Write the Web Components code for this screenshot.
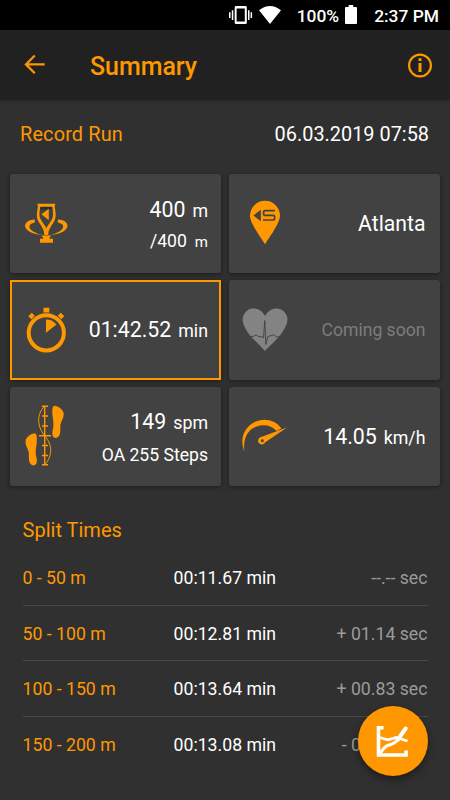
<!DOCTYPE html>
<html lang="en">
<head>
<meta charset="utf-8">
<title>Summary</title>
<style>
html,body{margin:0;height:100%;background:#303030}
body{font-family:Roboto,"Noto Sans",sans-serif;overflow:hidden}
</style>
</head>
<body>
<run-summary></run-summary>
<script>
const define = (name, html) => {
  const t = document.createElement('template');
  t.innerHTML = html;
  customElements.define(name, class extends HTMLElement {
    constructor() {
      super();
      this.attachShadow({mode: 'open'}).appendChild(t.content.cloneNode(true));
    }
  });
};

define('status-bar', `
<style>
:host{display:flex;height:30px;background:#000;color:#fff;font-size:17.400px;font-weight:500;line-height:32px;box-sizing:border-box;padding-right:11px;justify-content:flex-end;align-items:flex-start;white-space:pre}
svg{display:block;flex:none}
.pct{margin-left:15px}
.time{margin-left:17px}
</style>
<svg width="54" height="30" viewBox="228 0 54 30" fill="#fff">
<path fill-rule="evenodd" d="M236 6h9.500a1.300 1.300 0 0 1 1.300 1.300v15.400a1.300 1.300 0 0 1-1.300 1.300h-9.500a1.300 1.300 0 0 1-1.300-1.300V7.300A1.300 1.300 0 0 1 236 6zM236.600 8.500v13h8.200v-13z"/>
<path d="M229 12.200h1.500v5.800H229zM231.800 10.200h1.500v9.700h-1.500zM248 10.200h1.500v9.700H248zM250.600 12.200h1.500v5.800h-1.500z"/>
<path d="M259 10.200Q270 1.600 281 10.200L270 24z"/></svg>
<span class="pct">100%</span>
<svg width="12" height="30" viewBox="0 0 12 30" style="margin-left:6px"><path fill="#fff" d="M0 8q0-1 1-1h2.700V5h4.500v2H11q1 0 1 1v15q0 1-1 1H1q-1 0-1-1z"/></svg>
<span class="time">2:37 PM</span>`);

define('app-bar', `
<style>
:host{display:flex;height:70px;background:#212121;color:#ff9800;align-items:center;padding:0 18px 0 23px;box-shadow:0 1px 4px rgba(0,0,0,.25);box-sizing:border-box;position:relative}
.title{flex:1;margin-left:45px;font-size:25px;letter-spacing:-.05px;font-weight:500;line-height:30px;padding-top:4px}
svg{display:block;flex:none}
</style>
<svg width="22" height="22" viewBox="0 0 22 22" fill="none" stroke="#ff9800" stroke-width="2.200"><path d="M21.700 10.400H3M11.800 1.500l-8.900 8.900 8.900 8.900"/></svg>
<span class="title"><slot></slot></span>
<svg width="25" height="25" viewBox="0 0 25 25"><circle cx="13" cy="12.500" r="10.900" fill="none" stroke="#ff9800" stroke-width="2.200"/><path fill="#ff9800" d="M11.500 5.300h3v2.600h-3zM11.500 10h3v9h-3z"/></svg>`);

define('run-heading', `
<style>
:host{display:flex;justify-content:space-between;height:74px;box-sizing:border-box;padding:22px 21px 0 20px;font-size:19.900px;line-height:26px;color:#fff}
::slotted([slot=name]){color:#ff9800;letter-spacing:.15px}
</style><slot name="name"></slot><slot></slot>`);

define('stat-card', `
<style>
:host{display:flex;align-items:center;background:#424242;border-radius:3px;box-shadow:0 1px 4px rgba(0,0,0,.45);box-sizing:border-box;color:#fff;white-space:pre;position:relative}
:host([active]){border-radius:0}
:host([active])::after{content:"";position:absolute;inset:0;border:2px solid #ff9800}
:host([muted]){color:#7c7c7c}
.v{flex:1;display:flex;flex-direction:column;align-items:flex-end;padding-right:13px}
:host(.right) .v{padding-right:14.500px}
:host(.low) .v{padding-top:4px}
::slotted(svg){display:block;flex:none;margin-left:12px}
</style><slot name="icon"></slot><div class="v"><slot></slot></div>`);

define('stat-value', `
<style>
:host{display:flex;align-items:baseline;font-size:21.300px;line-height:31px}
.u{font-size:17.800px;margin-left:7px}
:host([small]){font-size:17.600px}
:host([small]) .u{font-size:15px;margin-left:8px}
</style><span><slot></slot></span><span class="u"><slot name="unit"></slot></span>`);

define('split-row', `
<style>
:host{display:grid;grid-template-columns:151px 1fr auto;height:55.500px;box-sizing:border-box;border-bottom:1px solid #484848;font-size:17.700px;line-height:22px;padding-top:17px;color:#fff;white-space:pre}
:host(:last-of-type){border-bottom:0}
::slotted([slot=range]){color:#ff9800}
::slotted([slot=delta]){color:#9b9b9b}
</style><slot name="range"></slot><slot></slot><slot name="delta"></slot>`);

define('chart-fab', `
<style>
:host{display:block;width:70px;height:70px;border-radius:50%;background:#ff9800;box-shadow:0 4px 9px rgba(0,0,0,.4)}
svg{display:block}
</style>
<svg width="70" height="70" viewBox="358 706 70 70" fill="none" stroke="#fff" stroke-width="3.600"><path d="M383.500 727.800h-5V755h27.600v-4.600"/><path stroke-width="2.800" d="M379 737.500l9 2.400 8.500-2.500 4.500 1.600 6.500 2"/><path stroke-width="3.200" d="M379.500 754c4-5 4.500-7 8-8.500 6.500-1.500 9-3.500 11.500-7.500"/><path stroke-width="4" stroke-linecap="round" d="M397.500 740l8.200-11.500"/></svg>`);

define('run-summary', `
<style>
:host{display:flex;flex-direction:column;height:800px;width:450px;overflow:hidden;background:#303030;position:relative}
.grid{display:grid;grid-template-columns:211px 211px;grid-template-rows:99px 100px 99px;gap:7px 8px;padding:0 10px}
h2{margin:29px 0 0 22.600px;font-size:20px;font-weight:400;line-height:30px;color:#ff9800}
.list{padding:5px 22.500px 0}
.w{font-size:21.200px;line-height:30px}
.s{font-size:17.600px;line-height:34px}
chart-fab{position:absolute;left:358px;top:706px}
</style>
<status-bar></status-bar>
<app-bar>Summary</app-bar>
<run-heading><span slot="name">Record Run</span><span>06.03.2019 07:58</span></run-heading>
<div class="grid">
<stat-card class="low">
<svg slot="icon" width="50" height="99" viewBox="22 174 50 99" fill="#ff9800"><path fill="#17343d" d="M40 206.500h12v3h-12z"/><path fill-rule="evenodd" d="M37.300 203.700h18l-.6 2.700c1 7 2 11-1.200 16-2.400 4-5.200 7-5.200 12.500h-4c0-5.500-2.800-8.500-5.200-12.500-3.200-5-2.200-9-1.200-16zM40.300 206.700c-1 6-1.300 9.500.5 12.800 2 3.600 4.300 6.300 5.500 8.700 1.200-2.400 3.500-5.100 5.500-8.700 1.800-3.300 1.500-6.800.5-12.800z"/><path d="M48.800 208.700v11.600l-7.300-6zM41.300 235.500h10l-2.300 2.800 1 .5h3v4H40v-4h2.500l1-.5z"/><path d="M34.800 219.500c-8 .2-12.600 5.500-7.700 10.300 3.300 3.200 9.300 5.100 16 5.200-7-1.400-15-5.200-13.500-9.600.8-2 3.400-2.200 5.200-2.900zM57.800 219.500c8 .2 12.600 5.500 7.700 10.300-3.300 3.200-9.300 5.100-16 5.200 7-1.400 15-5.200 13.500-9.600-.8-2-3.400-2.200-5.200-2.900z"/></svg>
<stat-value>400<span slot="unit">m</span></stat-value>
<stat-value small>/400<span slot="unit">m</span></stat-value>
</stat-card>
<stat-card class="right">
<svg slot="icon" width="50" height="99" viewBox="241 174 50 99"><path fill="#ff9800" d="M265 200.800a15 15 0 0 1 15 15c0 7-9 19-15 28.400-6-9.400-15-21.400-15-28.400a15 15 0 0 1 15-15z"/><path fill="#424242" d="M260.800 209.700v11.500l-7.500-5.700z"/><path fill="none" stroke="#424242" stroke-width="1.700" d="M275 210.700h-9.800q-1.700 0-1.700 2.400t1.700 2.300h7.800q1.700 0 1.700 2.300t-1.700 2.300H263"/></svg>
<span class="w">Atlanta</span>
</stat-card>
<stat-card active>
<svg slot="icon" width="50" height="99" viewBox="22 280.500 50 99" fill="#ff9800"><circle cx="46.300" cy="332.300" r="17.600" fill="none" stroke="#ff9800" stroke-width="4"/><path d="M46 319c4 0 7.500 1.300 10.500 5L46 332.300zM43.500 307.200h5.800v4.700h-5.800zM31.800 312.300l3 3-3.500 3.500-3-3zM60.800 312.300l3.500 3.500-3 3-3.500-3.500z"/></svg>
<stat-value>01:42.52<span slot="unit">min</span></stat-value>
</stat-card>
<stat-card class="right" muted>
<svg slot="icon" width="50" height="99" viewBox="241 280.500 50 99"><path fill="#838383" d="M265 350.500c-4-5-12-11-17.500-19-4-6-6-11.500-4.200-16 2-5 5.500-7.500 10-7.500 5 0 9 2.500 11.700 7.500 2.700-5 6.700-7.500 11.700-7.500 4.500 0 8.500 3 10.200 7.500 1.700 4.500-.4 10-4.400 16-5.500 8-13.500 14-17.500 19z"/><path fill="none" stroke="#424242" stroke-width=".9" d="M249 336h4l3-1.500 3 1.700h3l1.500 1.300 1.300-17.500 1 24 2-8 2-.5 3.500-1.200 3 2h5"/></svg>
<span class="s">Coming soon</span>
</stat-card>
<stat-card class="low">
<svg slot="icon" width="50" height="99" viewBox="22 387 50 99" fill="#ff9800"><path d="M54.500 405.800c3.500.3 9 3.800 9.200 8 .1 5-3.200 8-3.300 12-.2 5 .7 11-4.400 12.300-4.500-.4-4-5.300-3-9.300 1.200-5-.1-8-.5-13.500-.3-5-.7-8.500 2-9.500zM34.700 433.300c-3.500.3-9 3.800-9.200 8-.1 5 3.200 8 3.300 12 .2 5-.7 11 4.400 12.300 4.500-.4 4-5.300 3-9.300-1.200-5 .1-8 .5-13.500.3-5 .7-8.500-2-9.500z"/><path fill="none" stroke="#ff9800" stroke-width="1.400" d="M44.700 406v59M42 406.300h6M42 464.700h6M42 416h6M42 426h6M39 435.700h12M42 445.500h6M42 455.500h6"/><path fill="none" stroke="#ff9800" d="M44.700 406c-8 8-8 20 0 29.700s8 20 0 29.300"/></svg>
<stat-value>149<span slot="unit">spm</span></stat-value>
<span class="s">OA 255 Steps</span>
</stat-card>
<stat-card class="right">
<svg slot="icon" width="50" height="99" viewBox="241 387 50 99" fill="#ff9800"><path d="M244.300 451.500c-4-11-1.700-20 5.700-26.500 9-7.500 23.500-7.500 31.500 3.500l-5 2.500c-5-6-13-7-20.500-4.300-8.500 3-13 12-11.700 24.800z"/><path fill-rule="evenodd" d="M287 427.500l-21.700 14.700a3.800 3.800 0 0 1-6.500.8 3.700 3.700 0 0 1 1.600-5.700zM262.200 439.200a1.500 1.500 0 1 0 .1 3 1.500 1.500 0 0 0-.1-3z"/></svg>
<stat-value>14.05<span slot="unit">km/h</span></stat-value>
</stat-card>
</div>
<h2>Split Times</h2>
<div class="list">
<split-row><span slot="range">0 - 50 m</span><span>00:11.67 min</span><span slot="delta">--.-- sec</span></split-row>
<split-row><span slot="range">50 - 100 m</span><span>00:12.81 min</span><span slot="delta">+ 01.14 sec</span></split-row>
<split-row><span slot="range">100 - 150 m</span><span>00:13.64 min</span><span slot="delta">+ 00.83 sec</span></split-row>
<split-row><span slot="range">150 - 200 m</span><span>00:13.08 min</span><span slot="delta">- 00.56 sec</span></split-row>
</div>
<chart-fab></chart-fab>`);
</script>
</body>
</html>
